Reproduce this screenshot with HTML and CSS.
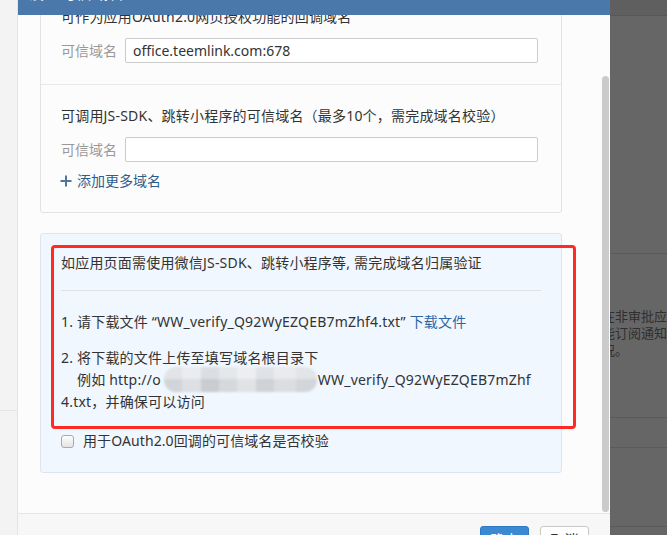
FILE: index.html
```html
<!DOCTYPE html>
<html lang="zh-CN">
<head>
<meta charset="utf-8">
<title>设置可信域名</title>
<link rel="stylesheet" href="styles.css">
</head>
<body>
<div class="page">
  <div class="left-strip"><div class="ls-top"></div></div>

  <div class="modal">
    <div class="modal-header">
      <span class="modal-title">设置可信域名</span>
      <span class="close">×</span>
    </div>

    <div class="modal-body">
      <div class="scroll-content">
        <div class="scroll-inner">
          <div class="card">
            <div class="section">
              <div class="line">可作为应用OAuth2.0网页授权功能的回调域名</div>
              <div class="field-row">
                <span class="field-label">可信域名</span>
                <div class="input">office.teemlink.com:678</div>
              </div>
            </div>
            <div class="section">
              <div class="line">可调用JS-SDK、跳转小程序的可信域名（最多10个，需完成域名校验）</div>
              <div class="field-row">
                <span class="field-label">可信域名</span>
                <div class="input"></div>
              </div>
              <div class="add-link">
                <svg class="plus" width="12" height="12" viewBox="0 0 12 12"><path d="M6 0.5V11.5M0.5 6H11.5" stroke="#4f759c" stroke-width="2" fill="none"/></svg>
                <span>添加更多域名</span>
              </div>
            </div>
          </div>

          <div class="card notice">
            <div class="line">如应用页面需使用微信JS-SDK、跳转小程序等, 需完成域名归属验证</div>
            <div class="rule"></div>
            <p class="step">1. 请下载文件 “WW_verify_Q92WyEZQEB7mZhf4.txt” <span class="link">下载文件</span></p>
            <p class="step step2">2. 将下载的文件上传至填写域名根目录下<br><span class="indent">例如 http://o<span class="blur"></span>WW_verify_Q92WyEZQEB7mZhf</span><br>4.txt，并确保可以访问</p>
            <label class="check-row"><span class="checkbox"></span><span>用于OAuth2.0回调的可信域名是否校验</span></label>
            <div class="red-box"></div>
          </div>
        </div>
      </div>
      <div class="scrollbar"><div class="thumb"></div></div>
    </div>

    <div class="modal-footer">
      <div class="btn btn-primary">确定</div>
      <div class="btn btn-default">取消</div>
    </div>
  </div>

  <div class="right-strip">
    <div class="rs-band"></div>
    <div class="rs-line1"></div>
    <div class="rs-text">在非审批应用<br>能订阅通知消<br>况。</div>
    <div class="rs-line2"></div>
    <div class="rs-line3"></div>
    <div class="rs-line4"></div>
  </div>
</div>
</body>
</html>
```

FILE: styles.css
```css
* { box-sizing: border-box; }
html, body { margin: 0; padding: 0; }
body {
  width: 667px;
  height: 535px;
  overflow: hidden;
  font-family: "Noto Sans", "Noto Sans CJK SC", sans-serif;
  font-size: 14px;
  color: #333;
}
.page { display: flex; width: 667px; height: 535px; overflow: hidden; }

/* background page left */
.left-strip { width: 18px; flex: none; background: #f3f3f3; border-right: 1px solid #e4e4e4; }
.ls-top { height: 411px; border-bottom: 1px solid #e6e6e6; }

/* modal */
.modal { width: 592px; flex: none; display: flex; flex-direction: column; background: #fcfcfc; height: 535px; }
.modal-header {
  height: 15px; flex: none; background: #4a78aa; color: #fff;
  display: flex; justify-content: space-between; align-items: flex-end;
  overflow: hidden; padding: 0 26px 0 10px;
}
.modal-title { font-size: 16px; line-height: 20px; margin-bottom: 12px; }
.close { font-size: 20px; line-height: 20px; margin-bottom: 13px; }

.modal-body { height: 498px; flex: none; display: flex; overflow: hidden; }
.scroll-content { flex: 1; padding-left: 22px; overflow: hidden; }
.scroll-inner { margin-top: -30px; width: 522px; }
.scrollbar { width: 7px; margin-right: 1px; flex: none; }
.thumb { margin-top: 61px; height: 436px; background: #cbcbcb; border-radius: 4px; }

.card { background: #fcfcfc; border: 1px solid #e3e3e3; border-radius: 3px; }
.section { padding: 21px 20px; }
.section + .section { border-top: 1px solid #e8e8e8; }
.line { line-height: 20px; white-space: nowrap; letter-spacing: 0.2px; }

.field-row { display: flex; align-items: center; margin-top: 11px; }
.field-label { width: 64px; flex: none; color: #999; line-height: 20px; }
.input {
  width: 413px; height: 25px; border: 1px solid #ccc; border-radius: 2px;
  background: #fff; padding: 0 7px; line-height: 23px; color: #333;
}
.add-link { display: flex; align-items: center; gap: 5px; margin: 9px 0 0 -1px; color: #2d5e8e; line-height: 20px; }
.plus { flex: none; }

.notice { margin-top: 20px; background: #f0f7fe; border-color: #dde5ee; position: relative; padding: 19px 20px 21px; }
.rule { margin-top: 17px; border-top: 1px solid #dde0e4; }
.step { margin: 20px 0 0; line-height: 22px; white-space: nowrap; letter-spacing: 0.2px; }
.step2 { margin-top: 14px; }
.link { color: #2766a6; }
.indent { padding-left: 16px; }
.blur {
  display: inline-block; vertical-align: top;
  width: 153px; height: 25px; margin: -2px 1px -1px 3px; border-radius: 12px;
  background-image:
    linear-gradient(180deg, rgba(255,255,255,0.25) 0 50%, rgba(0,0,0,0.03) 50% 100%),
    linear-gradient(90deg, #d8dbe0 0 12%, #e4e6ea 12% 24%, #cfd3d8 24% 36%, #dcdfe3 36% 48%, #e8e9ec 48% 60%, #d6d9de 60% 72%, #e2e4e8 72% 86%, #d9dce0 86% 100%);
  filter: blur(0.8px);
}
.check-row { display: flex; align-items: center; margin-top: 18px; line-height: 20px; letter-spacing: 0.1px; }
.checkbox {
  width: 13px; height: 13px; flex: none; margin-right: 9px;
  border: 1px solid #a9a9a9; border-radius: 3px;
  background: linear-gradient(#fdfdfd, #e4e4e4);
}
.red-box {
  position: absolute; left: 10px; top: 11px; width: 525px; height: 184px;
  border: 3px solid #ff2a22; border-radius: 4px;
}

.modal-footer {
  height: 22px; flex: none; border-top: 1px solid #e5e5e5; background: #f7f7f7;
  display: flex; justify-content: flex-end; gap: 11px; padding: 12px 21px 0 0; overflow: hidden;
}
.btn { width: 49px; height: 32px; flex: none; border-radius: 3px; font-size: 14px; line-height: 20px; padding-top: 3px; text-align: center; }
.btn-primary { background: #3b88d3; border: 1px solid #2f79c2; color: #fff; }
.btn-default { background: #fff; border: 1px solid #c8c8c8; color: #333; }

/* background page right (dimmed) */
.right-strip { flex: 1; background: #666; overflow: hidden; }
.rs-band { height: 16px; background: #5f5f5f; border-bottom: 1px solid #585858; }
.rs-line1 { height: 238px; border-bottom: 1px solid #5b5b5b; }
.rs-text { margin: 54px 0 0 -8px; font-size: 13px; line-height: 17px; color: #2f2f2f; white-space: nowrap; }
.rs-line2 { height: 59px; border-bottom: 1px solid #5b5b5b; }
.rs-line3 { height: 30px; border-bottom: 1px solid #5b5b5b; }
.rs-line4 { height: 79px; border-bottom: 1px solid #5b5b5b; }
```
